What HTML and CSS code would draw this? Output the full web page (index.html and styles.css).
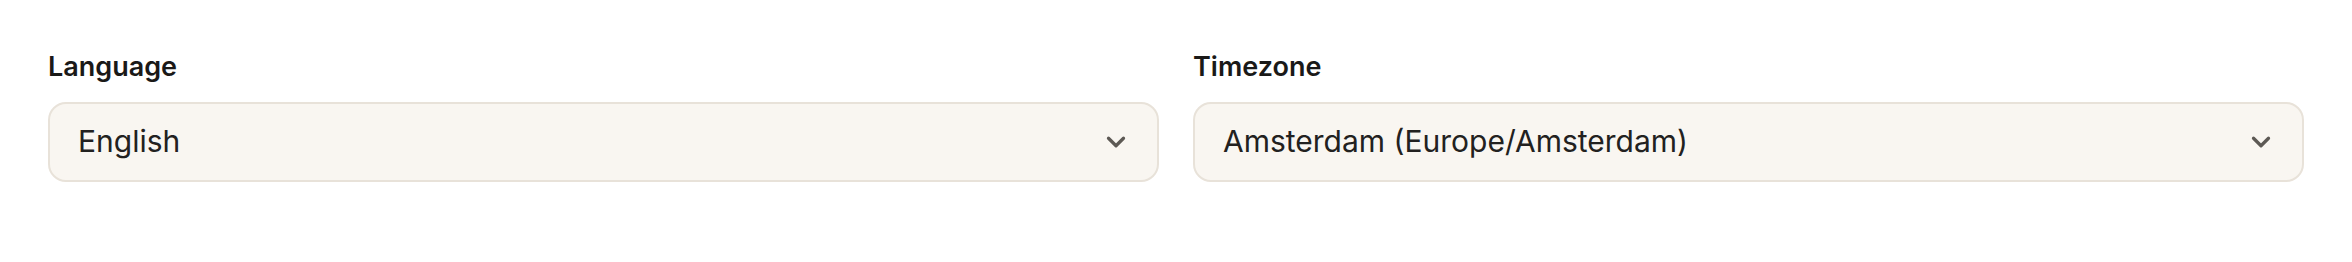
FILE: index.html
```html
<!DOCTYPE html>
<html lang="en">
<head>
    <meta charset="UTF-8">
    <meta name="viewport" content="width=device-width, initial-scale=1.0">
    <title>Preferences</title>
    <link rel="stylesheet" href="styles.css">
</head>
<body>
    <div class="settings">
        <div class="field">
            <label class="field-label">Language</label>
            <div class="select">
                <span class="select-value">English</span>
                <svg class="chevron" viewBox="0 0 24 24" fill="none" stroke="currentColor" stroke-width="2.6" stroke-linecap="round" stroke-linejoin="round"><path d="m6 9 6 6 6-6"/></svg>
            </div>
        </div>
        <div class="field">
            <label class="field-label">Timezone</label>
            <div class="select">
                <span class="select-value">Amsterdam (Europe/Amsterdam)</span>
                <svg class="chevron" viewBox="0 0 24 24" fill="none" stroke="currentColor" stroke-width="2.6" stroke-linecap="round" stroke-linejoin="round"><path d="m6 9 6 6 6-6"/></svg>
            </div>
        </div>
    </div>
</body>
</html>
```

FILE: styles.css
```css
body {
    margin: 0;
    background: #ffffff;
    font-family: Inter, "Noto Sans", sans-serif;
    color: #1c1b1a;
}
.settings {
    display: grid;
    grid-template-columns: 1fr 1fr;
    gap: 34px;
    padding: 49px 48px 0;
}
.field-label {
    display: block;
    font-size: 27px;
    font-weight: 600;
    line-height: 36px;
    margin-bottom: 17px;
    color: #1a1918;
}
.select {
    display: flex;
    align-items: center;
    justify-content: space-between;
    height: 80px;
    box-sizing: border-box;
    padding: 0 26px 0 28px;
    background-color: #f9f6f1;
    border: 2px solid #e8e2d9;
    border-radius: 18px;
}
.select-value {
    font-size: 30px;
    line-height: 36px;
    margin-top: -3px;
    color: #222120;
}
.chevron {
    width: 30px;
    height: 30px;
    color: #5d5954;
}
```
